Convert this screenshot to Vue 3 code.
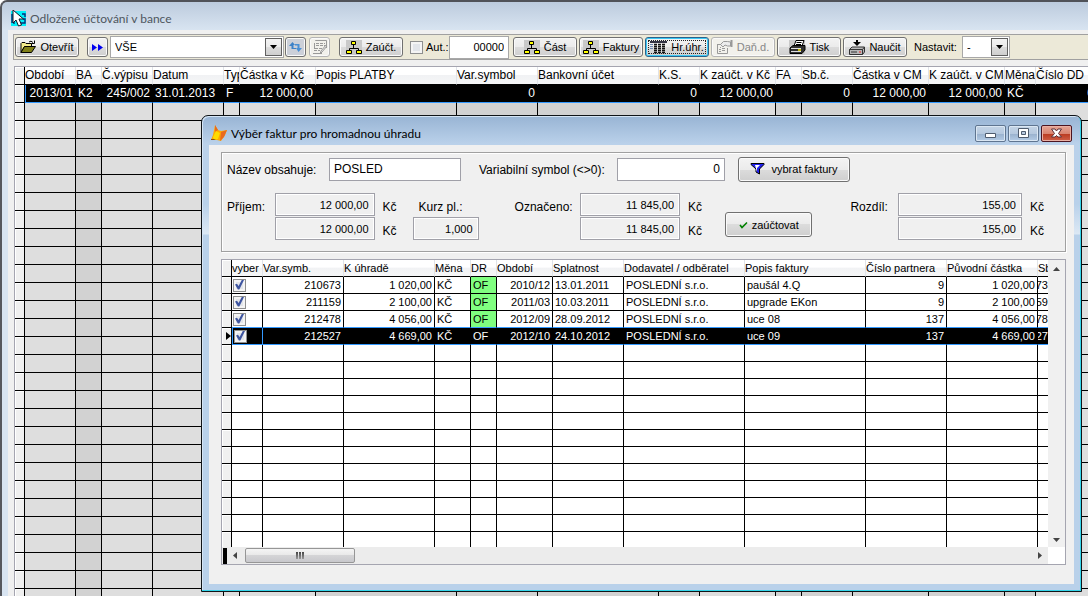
<script setup>
import { ref } from 'vue'

const filterText = ref('POSLED')
const symbol = ref('0')

const bankColumns = [
  { label: 'Období', width: 51, align: 'right' },
  { label: 'BA', width: 26, dark: true },
  { label: 'Č.výpisu', width: 51, align: 'right' },
  { label: 'Datum', width: 71 },
  { label: 'Typ', width: 16 },
  { label: 'Částka v Kč', width: 76, align: 'right' },
  { label: 'Popis PLATBY', width: 141, dark: true },
  { label: 'Var.symbol', width: 81, align: 'right', dark: true },
  { label: 'Bankovní účet', width: 121, dark: true },
  { label: 'K.S.', width: 41, align: 'right', dark: true },
  { label: 'K zaúčt. v Kč', width: 76, align: 'right' },
  { label: 'FA', width: 26, dark: true },
  { label: 'Sb.č.', width: 51, align: 'right', dark: true },
  { label: 'Částka v CM', width: 76, align: 'right', dark: true },
  { label: 'K zaúčt. v CM', width: 76, align: 'right', dark: true },
  { label: 'Měna', width: 31, dark: true },
  { label: 'Číslo DD', width: 61, align: 'right' }
]
const bankRow = ['2013/01', 'K2', '245/002', '31.01.2013', 'F', '12 000,00', '', '0', '', '0', '12 000,00', '', '0', '12 000,00', '12 000,00', 'KČ', '0']

const invoiceColumns = [
  { label: 'Var.symb.', width: 81, align: 'right' },
  { label: 'K úhradě', width: 91, align: 'right' },
  { label: 'Měna', width: 36 },
  { label: 'DR', width: 26, flag: true },
  { label: 'Období', width: 56, align: 'right' },
  { label: 'Splatnost', width: 71 },
  { label: 'Dodavatel / odběratel', width: 121 },
  { label: 'Popis faktury', width: 121 },
  { label: 'Číslo partnera', width: 81, align: 'right' },
  { label: 'Původní částka', width: 91, align: 'right' },
  { label: 'Sb', width: 11, align: 'right', tight: true }
]
const invoices = ref([
  { checked: true, cells: ['210673', '1 020,00', 'KČ', 'OF', '2010/12', '13.01.2011', 'POSLEDNÍ s.r.o.', 'paušál 4.Q', '9', '1 020,00', '73'] },
  { checked: true, cells: ['211159', '2 100,00', 'KČ', 'OF', '2011/03', '10.03.2011', 'POSLEDNÍ s.r.o.', 'upgrade EKon', '9', '2 100,00', '59'] },
  { checked: true, cells: ['212478', '4 056,00', 'KČ', 'OF', '2012/09', '28.09.2012', 'POSLEDNÍ s.r.o.', 'uce 08', '137', '4 056,00', '78'] },
  { checked: true, current: true, cells: ['212527', '4 669,00', 'KČ', 'OF', '2012/10', '24.10.2012', 'POSLEDNÍ s.r.o.', 'uce 09', '137', '4 669,00', '27'] }
])
</script>

<template>
  <div class="window">
    <header class="caption">
      <svg class="app-icon" width="17" height="18" viewBox="0 0 17 18" aria-hidden="true">
        <rect x="1" y="1" width="15" height="15" fill="#00f0f8" />
        <path d="M2 4v9M4 6v8M12 4h3v3M13 9h2v4h-3M8 13h5" stroke="#0a2a7a" stroke-width="1.4" fill="none" />
        <path d="M3 0v13l3-3 2.500 6 3-1-2.500-6h4.500z" fill="#fff" stroke="#151525" />
      </svg>
      <h1>Odložené účtování v bance</h1>
    </header>

    <main class="client">
      <div class="toolbar">
        <button type="button" class="tool">
          <svg width="16" height="14" viewBox="0 0 16 14" aria-hidden="true">
            <path d="M1 12.500V3.500l1-1h3l1 1h5.500v3H4.500z" fill="#f4ec8c" stroke="#000" />
            <path d="M1 12.500l3.500-6H15.500l-4 6z" fill="#808018" stroke="#000" />
            <path d="M9 2q2-2 4 .5M14.500 .5v3h-3" fill="none" stroke="#000" />
          </svg>
          <span>Otevřít</span>
        </button>
        <button type="button" class="tool small next" aria-label="Další">
          <svg width="11" height="7" viewBox="0 0 11 7" aria-hidden="true"><path d="M0 0l5 3.500L0 7zM6 0l5 3.500L6 7z" fill="#0000f0" /></svg>
        </button>
        <span class="combo wide">
          <select aria-label="Filtr"><option>VŠE</option></select>
          <span class="drop"><svg width="7" height="4" viewBox="0 0 7 4"><path d="M0 0h7L3.500 4z" /></svg></span>
        </span>
        <button type="button" class="tool small refresh" aria-label="Obnovit">
          <svg width="13" height="12" viewBox="0 0 13 12" aria-hidden="true">
            <path d="M0 5l3.500-4L6 4H4.500v3H7v1H2.500V5z" fill="#3c82c8" />
            <path d="M6 3h4.500v4H13l-3.500 4L7 7h1.500V4.500H6z" fill="#4a90d4" />
          </svg>
        </button>
        <button type="button" class="tool small off" aria-label="Upravit" disabled>
          <svg width="16" height="15" viewBox="0 0 16 15" aria-hidden="true">
            <path d="M3.500 1V.5h11V8M2.500 3v6M1 13.500h9" fill="none" stroke="#999" />
            <path d="M4 3.500h9M4 5.500h9M3 8.500h8M2 10.500h6" stroke="#999" stroke-dasharray="3 1" />
            <path d="M15 6l-5 6-2 2 1-3 5-6z" fill="#eee" stroke="#999" />
          </svg>
        </button>
        <button type="button" class="tool account">
          <svg width="16" height="15" viewBox="0 0 16 15" aria-hidden="true">
            <rect width="16" height="15" fill="#c9c9c9" />
            <path d="M7.500 5v3M3.500 11V8.500h9V11" fill="none" stroke="#000" />
            <path d="M5.500 1.500h4v3h-4zM.5 10.500h5v3h-5zM10.500 10.500h5v3h-5z" fill="#ffff00" stroke="#000" />
          </svg>
          <span>Zaúčt.</span>
        </button>
        <label class="auto"><input type="checkbox" class="check" /> <span>Aut.:</span></label>
        <input class="counter" aria-label="Aut. číslo" value="00000" />
        <div class="group">
          <button v-for="name in ['Část', 'Faktury']" :key="name" type="button" class="tool">
            <svg width="16" height="15" viewBox="0 0 16 15" aria-hidden="true">
              <rect width="16" height="15" fill="#c9c9c9" />
              <path d="M7.500 5v3M3.500 11V8.500h9V11" fill="none" stroke="#000" />
              <path d="M5.500 1.500h4v3h-4zM.5 10.500h5v3h-5zM10.500 10.500h5v3h-5z" fill="#ffff00" stroke="#000" />
            </svg>
            <span>{{ name }}</span>
          </button>
          <button type="button" class="tool active">
            <svg width="17" height="13" viewBox="0 0 17 13" aria-hidden="true">
              <path d="M0 0h17v2H0z" fill="#334" />
              <path d="M0 3.500h3M0 5.500h3M0 7.500h3" stroke="#6f87b0" />
              <path d="M4 3.500h12M4 5.500h12M4 7.500h12M4 9.500h12M4 11.500h12" stroke="#111" stroke-width="1.300" stroke-dasharray="3 1" />
            </svg>
            <span>Hr.úhr.</span>
          </button>
          <button type="button" class="tool off" disabled>
            <svg width="16" height="14" viewBox="0 0 16 14" aria-hidden="true">
              <path d="M1 4.500h3M.5 4v9.500h10V8M3 7.500h1M5 8.500h3M2 9.500h2M5 10.500h3M2 11.500h2" fill="none" stroke="#999" />
              <path d="M3.500 4.500l3-3h4l3 .5v4h-3L8 5 6 7 5 6z" fill="#ececec" stroke="#999" /><path d="M14.500 0v7" stroke="#999" stroke-width="2" />
            </svg>
            <span>Daň.d.</span>
          </button>
          <button type="button" class="tool">
            <svg width="17" height="15" viewBox="0 0 17 15" aria-hidden="true">
              <rect width="16" height="15" fill="#c9c9c9" />
              <path d="M5 6l2-5.500h8L13 6z" fill="#fff" stroke="#000" /><path d="M7.500 2.500h5M7 4.500h5" stroke="#000" />
              <path d="M1 8l3-2.500h12V10l-3 3.500H1z" fill="#303030" stroke="#000" />
              <path d="M2 8.500h10M2 11.500h10" stroke="#ddd" /><path d="M9 10h3" stroke="#f4e800" stroke-width="1.500" />
            </svg>
            <span>Tisk</span>
          </button>
          <button type="button" class="tool">
            <svg width="16" height="15" viewBox="0 0 16 15" aria-hidden="true">
              <path d="M7 0h2v2h3L8 6 4 2h3z" fill="#000" />
              <path d="M.5 9.500l2.500-2.500h12.500V12l-2 2.500H.5z" fill="#b8b8b8" stroke="#333" />
              <path d="M.5 9.500h13v5M13.500 9.500l2-2.500" fill="none" stroke="#333" /><path d="M2 12h6" stroke="#333" /><path d="M10 12h2" stroke="#f02020" />
            </svg>
            <span>Naučit</span>
          </button>
        </div>
        <label class="setup" for="setup">Nastavit:</label>
        <span class="combo narrow">
          <select id="setup"><option>-</option></select>
          <span class="drop"><svg width="7" height="4" viewBox="0 0 7 4"><path d="M0 0h7L3.500 4z" /></svg></span>
        </span>
      </div>

      <div class="bank">
        <table class="grid">
          <colgroup>
            <col class="handle-col" />
            <col v-for="c in bankColumns" :key="c.label" :style="{ width: c.width + 'px' }" />
          </colgroup>
          <thead>
            <tr><th class="handle"></th><th v-for="c in bankColumns" :key="c.label">{{ c.label }}</th></tr>
          </thead>
          <tbody>
            <tr class="current">
              <td class="handle"></td>
              <td v-for="(c, i) in bankColumns" :key="c.label" :class="c.align">{{ bankRow[i] }}</td>
            </tr>
            <tr v-for="n in 30" :key="n">
              <td class="handle"></td>
              <td v-for="c in bankColumns" :key="c.label" :class="{ dark: c.dark }"></td>
            </tr>
          </tbody>
        </table>
      </div>
    </main>

    <section class="dialog" role="dialog" aria-labelledby="dialog-title">
      <header class="dialog-caption">
        <svg class="fox" width="16" height="17" viewBox="0 0 16 17" aria-hidden="true">
          <path d="M4 0l3 5 3 1 6-1-2 5-4 6-4-1H0l2-5z" fill="#ffa800" />
          <path d="M16 5l-6 2-1 9 4-4zM4 0v7l3-2z" fill="#e86a20" />
          <path d="M5 6l4 2-2 6-4 1-1-3z" fill="#ffdc00" /><path d="M0 14h3l2 1H0z" fill="#8a5010" />
        </svg>
        <h2 id="dialog-title">Výběr faktur pro hromadnou úhradu</h2>
        <div class="controls">
          <button type="button" aria-label="Minimalizovat"><svg width="13" height="13" viewBox="0 0 13 13"><path d="M1.500 6.500h10v4h-10z" fill="#fff" stroke="#4f5c6e" /></svg></button>
          <button type="button" aria-label="Maximalizovat"><svg width="13" height="13" viewBox="0 0 13 13"><path d="M1.500 1.500h10v9h-10zM4.500 4.500v3h4v-3z" fill="#fff" fill-rule="evenodd" stroke="#4f5c6e" /></svg></button>
          <button type="button" class="close" aria-label="Zavřít"><svg width="13" height="13" viewBox="0 0 13 13"><path d="M1.500 2h3.500l1.500 2 1.500-2h3.500L8.500 6.500 11.500 10H8L6.500 8.500 5 10H1.500l3-3.500z" fill="#fff" stroke="#5c3038" /></svg></button>
        </div>
      </header>

      <div class="dialog-body">
        <form class="panel" @submit.prevent>
          <div class="filters">
            <label for="name">Název obsahuje:</label>
            <input id="name" v-model="filterText" class="name" />
            <label for="symbol" class="symbol-label">Variabilní symbol (&lt;&gt;0):</label>
            <input id="symbol" v-model="symbol" class="symbol" />
            <button type="submit" class="push pick">
              <svg width="15" height="12" viewBox="0 0 15 12" aria-hidden="true">
                <path d="M1 .5h13v1L9.500 6v5L6 9V6L1 1.500z" fill="#2020f0" stroke="#000" /><path d="M5 2h5L7 5v4z" fill="#fff" />
              </svg>
              <span>vybrat faktury</span>
            </button>
          </div>
          <div class="totals">
            <label for="income">Příjem:</label>
            <div class="pair">
              <input id="income" readonly value="12 000,00" /><span>Kč</span>
              <input readonly aria-label="Příjem v měně" value="12 000,00" /><span>Kč</span>
            </div>
            <div class="rate"><label for="rate">Kurz pl.:</label><input id="rate" readonly value="1,000" /></div>
            <label for="marked" class="marked">Označeno:</label>
            <div class="pair">
              <input id="marked" readonly value="11 845,00" /><span>Kč</span>
              <input readonly aria-label="Označeno v měně" value="11 845,00" /><span>Kč</span>
            </div>
            <button type="button" class="push post">
              <svg width="9" height="8" viewBox="0 0 9 8" aria-hidden="true"><path d="M1 4l2 2.500L8 1.500" fill="none" stroke="#008000" stroke-width="1.600" /></svg>
              <span>zaúčtovat</span>
            </button>
            <label for="difference" class="difference">Rozdíl:</label>
            <div class="pair last">
              <input id="difference" readonly value="155,00" /><span>Kč</span>
              <input readonly aria-label="Rozdíl v měně" value="155,00" /><span>Kč</span>
            </div>
          </div>
        </form>

        <div class="invoices">
          <div class="view">
            <table class="grid compact">
              <colgroup>
                <col class="handle-col" />
                <col class="check-col" />
                <col v-for="c in invoiceColumns" :key="c.label" :style="{ width: c.width + 'px' }" />
              </colgroup>
              <thead>
                <tr><th class="handle"></th><th>vyber</th><th v-for="c in invoiceColumns" :key="c.label">{{ c.label }}</th></tr>
              </thead>
              <tbody>
                <tr v-for="(row, r) in invoices" :key="r" :class="{ current: row.current, before: r === 2 }">
                  <td class="handle"><svg v-if="row.current" width="5" height="8" viewBox="0 0 5 8"><path d="M0 0l5 4-5 4z" /></svg></td>
                  <td class="pick-cell"><input v-model="row.checked" type="checkbox" class="check" :aria-label="'Vybrat ' + row.cells[0]" /></td>
                  <td v-for="(c, i) in invoiceColumns" :key="c.label" :class="[c.align, { flag: c.flag, tight: c.tight }]"><div>{{ row.cells[i] }}</div></td>
                </tr>
                <tr v-for="n in 12" :key="'e' + n" :class="{ end: n === 12 }">
                  <td class="handle"></td><td></td><td v-for="c in invoiceColumns" :key="c.label"></td>
                </tr>
              </tbody>
            </table>
          </div>
          <div class="vbar">
            <svg width="7" height="4" viewBox="0 0 7 4"><path d="M0 4h7L3.500 0z" /></svg>
            <svg width="7" height="4" viewBox="0 0 7 4"><path d="M0 0h7L3.500 4z" /></svg>
          </div>
          <div class="hbar">
            <i class="split"></i>
            <svg width="4" height="7" viewBox="0 0 4 7"><path d="M4 0v7L0 3.500z" /></svg>
            <div class="thumb"><i></i><i></i><i></i></div>
            <svg class="end" width="4" height="7" viewBox="0 0 4 7"><path d="M0 0v7l4-3.500z" /></svg>
          </div>
        </div>
      </div>
    </section>
  </div>
</template>

<style>
html, body { overflow: hidden; }
</style>

<style scoped>
* { box-sizing: border-box; }
.window {
  position: relative; display: flex; flex-direction: column; height: 100vh; overflow: hidden;
  padding-left: 6px; border-left: 2px solid #56585e; border-top: 2px solid #505258; border-top-left-radius: 7px;
  background: linear-gradient(#bccbdd, #d8e4f1 28px); color: #000;
  font: 12px/14px "Liberation Sans", Arial, sans-serif;
}
button, input, select { font: inherit; color: inherit; margin: 0; }
svg { flex: none; display: block; }
h1, h2 { margin: 0; font: 12px/16px Lato, "Open Sans", sans-serif; }
.caption { display: flex; align-items: center; gap: 3px; height: 28px; padding: 6px 0 0 2px; flex: none; }
.caption h1 { color: #4e565e; }
.client { flex: 1; min-height: 0; background: #f0f0f0; padding: 4px 0 0 5px; display: flex; flex-direction: column; }

.toolbar {
  display: flex; align-items: center; flex: none; height: 26px; padding-left: 1px; background: #ece9d8;
  border: 1px solid #a0a0a0; border-right: 0; white-space: nowrap; font-size: 11px;
}
.tool, .push {
  display: flex; align-items: center; justify-content: center; gap: 4px; padding: 0;
  border: 1px solid #707070; border-radius: 3px; white-space: nowrap; font-size: 11px;
  background: linear-gradient(#f3f3f3, #ebebeb 50%, #dcdcdc 50%, #cfcfcf); box-shadow: inset 0 0 0 1px #fafafa;
}
.tool { width: 64px; height: 20px; flex: none; }
.tool.small { width: 21px; }
.next { margin-left: 8px; }
.refresh { background: #ccd0d8; margin-right: 3px; }
.tool.off { background: #f2f1ec; border-color: #b4b4b4; color: #888; }
.tool.active { border-color: #2c628b; box-shadow: inset 0 0 0 1px #3cc8f4; outline: 1px dotted #222; outline-offset: -4px; }
.account { margin-left: 9px; }
.combo { position: relative; display: block; height: 22px; flex: none; }
.combo.wide { width: 174px; margin: 0 1px 0 2px; }
.combo.narrow { width: 48px; }
.combo select { appearance: none; width: 100%; height: 100%; padding: 0 20px 0 4px; border: 1px solid #a8a8a8; border-radius: 0; background: #fff; }
.drop {
  position: absolute; top: 2px; right: 2px; width: 17px; height: 18px; pointer-events: none; display: grid; place-items: center;
  border: 1px solid #606060; background: linear-gradient(#f3f3f3, #ebebeb 50%, #dcdcdc 50%, #cfcfcf);
}
.auto { display: flex; align-items: center; gap: 3px; margin-left: 7px; width: 39px; }
.check {
  appearance: none; display: block; width: 13px; height: 13px; flex: none; border: 1px solid #8e8f8f; background: #e2e5ea;
  box-shadow: inset 0 0 0 2px #f4f4f4;
}
.check:checked::after {
  content: ""; display: block; width: 9px; height: 10px; margin-left: 1px; background: #3e55a0;
  clip-path: polygon(0 50%, 22% 42%, 40% 65%, 78% 0, 100% 5%, 48% 100%, 32% 100%);
}
.counter { width: 60px; height: 23px; margin-right: 4px; padding: 0 4px; border: 1px solid #a8a8a8; text-align: right; flex: none; }
.group { display: flex; gap: 2px; }
.setup { margin-left: 7px; width: 48px; }

.bank { flex: 1; min-height: 0; margin: 6px 0 0 1px; overflow: hidden; border: 1px solid #a5a5b0; border-right: 0; border-bottom: 0; }
.grid { table-layout: fixed; width: 1px; border-spacing: 0; font-size: 12px; line-height: 15px; }
.handle-col { width: 10px; }
.check-col { width: 31px; }
.grid th {
  height: 18px; padding: 0 0 1px; border-right: 1px solid #e0e3e8; border-bottom: 1px solid #000; text-align: left; font-weight: normal;
  white-space: nowrap; overflow: hidden; background: linear-gradient(#fff 45%, #f1f2f4 50%, #f5f6f7);
}
.grid td {
  height: 18px; padding: 0 2px; border-right: 1px solid #000; border-bottom: 1px solid #000; background: #dedede;
  white-space: nowrap; overflow: hidden;
}
.grid td.dark { background: #d2d2d2; }
.grid .handle { padding: 0; background: #f0f0f0; border-right-color: #000; box-shadow: inset 1px 1px #fff; }
.grid .right { text-align: right; }
.grid .current td:not(.handle) { background: #000; color: #fff; border-bottom-color: #3399ff; }
.bank .current td:nth-child(2) { border-left: 1px solid #3399ff; }

.dialog {
  position: absolute; left: 199px; right: 6px; top: 113px; border: 1px solid #101418; border-radius: 7px 7px 0 0;
  background: linear-gradient(#98b4d4, #bad1ea 28px, #b9d1ea 88px, #dce8f4 118px, #b9d1ea 119px); padding: 0 7px 7px;
  box-shadow: inset -1px -1px #35d5ea, inset 1px 1px #d5e5f5;
}
.dialog-caption { display: flex; align-items: center; height: 29px; padding: 6px 2px 0 2px; }
.dialog-caption h2 { margin-left: 4px; flex: 1; }
.controls { display: flex; gap: 2px; }
.controls button {
  display: grid; place-items: center; width: 31px; height: 17px; padding: 0; border: 1px solid #5f7590; border-radius: 2px;
  background: linear-gradient(#c4d4e6, #b6c9df 50%, #98b0cc 50%, #b4cce6); box-shadow: inset 0 0 0 1px #dbe7f3;
}
.controls .close { border-color: #4c1420; background: linear-gradient(#e6a596, #d98470 50%, #b8381e 50%, #cf6048); box-shadow: inset 0 0 0 1px #eab0a4; }
.dialog-body { background: #f0f0f0; padding: 7px 8px 19px 12px; }
.panel { border: 1px solid #a0a0a0; box-shadow: inset 1px 1px #fff, 1px 1px #fff; height: 100px; padding: 4px 5px; }
.panel input { height: 23px; border: 1px solid #a0a0a8; padding: 0 4px; background: #fff; min-width: 0; }
.filters { display: flex; align-items: center; height: 24px; }
.filters label { width: 102px; padding-top: 2px; }
.filters .name { width: 132px; }
.filters .symbol-label { width: 138px; margin-left: 18px; }
.filters .symbol { width: 108px; text-align: right; }
.push { height: 25px; }
.pick { width: 112px; margin-left: 13px; gap: 6px; }
.totals { display: flex; margin-top: 12px; line-height: 28px; }
.totals > label { width: 48px; }
.totals input { text-align: right; font-size: 11px; padding-right: 5px; background: #f0f0f0; box-shadow: inset 0 0 0 1px #fff; }
.pair { display: grid; grid-template: 24px 24px / 100px 30px; column-gap: 8px; }
.pair.last { grid-template-columns: 124px 30px; }
.rate { display: grid; grid-template: 24px 24px / 66px; }
.rate label { padding-left: 6px; }
.totals .marked { width: 66px; margin-left: 36px; }
.post { width: 88px; margin: 19px 38px 0 7px; line-height: 14px; }

.invoices {
  display: grid; grid-template: 287px 17px / 1fr 17px; margin-top: 7px; border: 1px solid #a5a5b0; background: #fff;
}
.view { overflow: hidden; }
.compact { font-size: 11px; line-height: 14px; }
.compact th, .compact td { height: 17px; }
.compact td { background: #fff; }
.compact td.flag { background: #80ff80; }
.compact .end td { border-bottom-color: #fff; }
.compact td div { display: flex; }
.compact .right div { justify-content: flex-end; }
.compact td.tight { padding: 0; }
.compact td.pick-cell { padding: 0 0 0 1px; }
.compact .before td:not(.handle) { border-bottom-color: #3399ff; }
.compact .current .pick-cell { border-left: 1px solid #3399ff; border-right-color: #3399ff; }
.handle svg { margin-left: 4px; }
.vbar { display: flex; flex-direction: column; align-items: center; justify-content: space-between; padding: 7px 0 5px; background: #f0f0f0; }
.vbar svg, .hbar svg { fill: #444; }
.hbar { display: flex; align-items: center; background: #ececec; padding-left: 1px; padding-right: 6px; }
.split { width: 4px; height: 16px; background: #000; }
.hbar svg:first-of-type { margin: 0 8px 0 6px; }
.hbar .end { margin-left: auto; }
.thumb {
  display: flex; align-items: center; justify-content: center; gap: 1px; width: 110px; height: 15px; border: 1px solid #969696; border-radius: 2px;
  background: linear-gradient(#f4f4f4, #e8e8e8 50%, #d4d4d6 50%, #c8c8cc);
}
.thumb i { width: 2px; height: 7px; background: linear-gradient(#444, #999); }
</style>
